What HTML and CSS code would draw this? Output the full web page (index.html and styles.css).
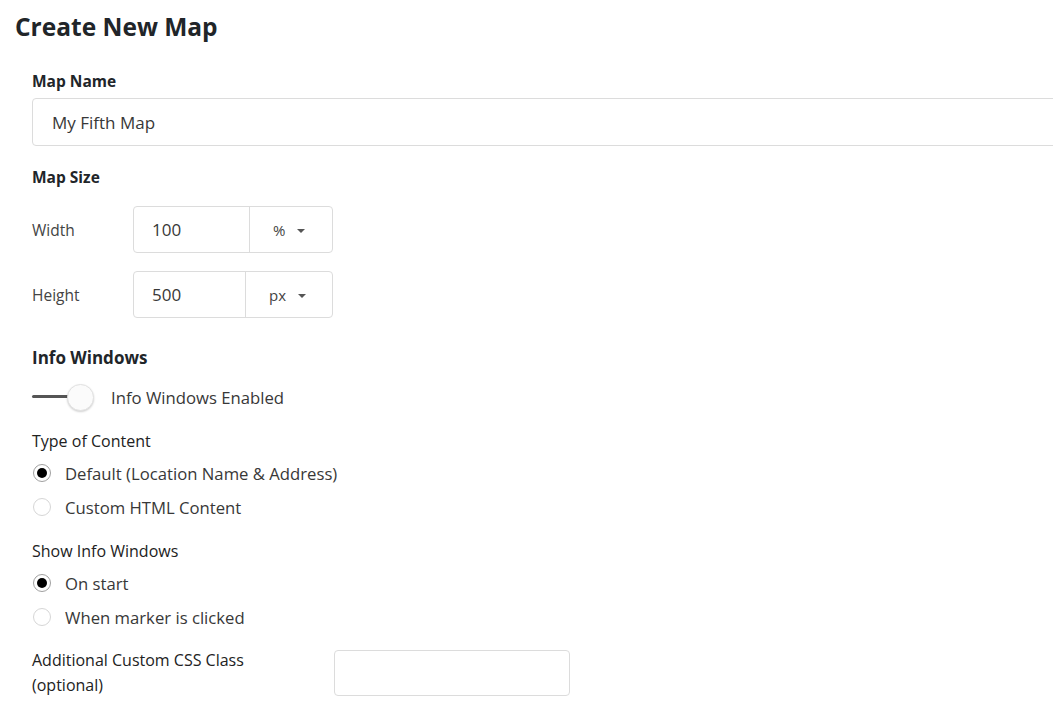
FILE: index.html
```html
<!DOCTYPE html>
<html>
<head>
<meta charset="utf-8">
<link rel="stylesheet" href="styles.css">
</head>
<body>
<div class="page">
  <h1 class="title">Create New Map</h1>
  <div class="form">
    <div class="field">
      <div class="label-bold">Map Name</div>
      <div class="text-input wide"><span class="value">My Fifth Map</span></div>
    </div>

    <div class="label-bold size-head">Map Size</div>
    <div class="size-row">
      <div class="row-label">Width</div>
      <div class="group">
        <div class="group-value w1">100</div>
        <div class="group-select s1"><span>%</span><span class="caret"></span></div>
      </div>
    </div>
    <div class="size-row">
      <div class="row-label">Height</div>
      <div class="group">
        <div class="group-value w2">500</div>
        <div class="group-select s2"><span>px</span><span class="caret"></span></div>
      </div>
    </div>

    <h2 class="section">Info Windows</h2>
    <div class="toggle-row">
      <div class="toggle"><span class="track"></span><span class="knob"></span></div>
      <span class="opt-text">Info Windows Enabled</span>
    </div>

    <div class="group-label">Type of Content</div>
    <div class="radio-row"><span class="radio checked"></span><span class="opt-text">Default (Location Name &amp; Address)</span></div>
    <div class="radio-row"><span class="radio"></span><span class="opt-text">Custom HTML Content</span></div>

    <div class="group-label second">Show Info Windows</div>
    <div class="radio-row"><span class="radio checked"></span><span class="opt-text">On start</span></div>
    <div class="radio-row"><span class="radio"></span><span class="opt-text">When marker is clicked</span></div>

    <div class="css-row">
      <div class="css-label">Additional Custom CSS Class<br>(optional)</div>
      <div class="text-input small"></div>
    </div>
  </div>
</div>
</body>
</html>
```

FILE: styles.css
```css
html, body {
  margin: 0;
  padding: 0;
  background: #ffffff;
  overflow: hidden;
}
body {
  font-family: "Open Sans", "Noto Sans", sans-serif;
  color: #212529;
}
.page {
  padding: 11px 0 0 15px;
  width: 1020px;
}
.title {
  margin: 0;
  font-size: 24.5px;
  font-weight: 700;
  line-height: 32px;
  color: #212529;
}
.form {
  padding-left: 17px;
  margin-top: 28px;
}
.label-bold {
  font-size: 15.5px;
  font-weight: 700;
  line-height: 20px;
}
.field .label-bold {
  margin-bottom: 7px;
}
.text-input {
  box-sizing: border-box;
  border: 1px solid #dcdcdc;
  border-radius: 4px;
  background: #fff;
  display: flex;
  align-items: center;
}
.text-input.wide {
  height: 48px;
  margin-right: -40px;
  padding-left: 19px;
}
.value {
  font-size: 17px;
  color: #383838;
}
.size-head {
  margin-top: 21px;
}
.size-row {
  display: flex;
  align-items: center;
  margin-top: 19px;
}
.size-row + .size-row {
  margin-top: 18px;
}
.row-label {
  width: 101px;
  font-size: 15.5px;
  color: #444;
}
.group {
  display: flex;
  height: 47px;
  box-sizing: border-box;
  border: 1px solid #dcdcdc;
  border-radius: 4px;
}
.group-value {
  display: flex;
  align-items: center;
  padding-left: 18px;
  box-sizing: border-box;
  border-right: 1px solid #dcdcdc;
  font-size: 17px;
  color: #383838;
}
.w1 { width: 116px; }
.w2 { width: 112px; }
.group-select {
  display: flex;
  align-items: center;
  box-sizing: border-box;
  font-size: 15px;
  color: #444;
}
.s1 { width: 82px; padding-left: 23px; }
.s2 { width: 86px; padding-left: 23px; }
.caret {
  width: 0;
  height: 0;
  border-left: 4px solid transparent;
  border-right: 4px solid transparent;
  border-top: 4px solid #555;
  margin-left: 12px;
  margin-top: 2px;
}
.section {
  margin: 29px 0 0 0;
  font-size: 17px;
  font-weight: 700;
  line-height: 22px;
}
.toggle-row {
  display: flex;
  align-items: center;
  margin-top: 14px;
  height: 28px;
}
.toggle {
  position: relative;
  width: 62px;
  height: 28px;
  margin-right: 17px;
}
.track {
  position: absolute;
  left: 0;
  top: 12px;
  width: 46px;
  height: 3px;
  border-radius: 2px;
  background: #555;
}
.knob {
  position: absolute;
  left: 35px;
  top: 1px;
  width: 25px;
  height: 25px;
  border-radius: 50%;
  background: #fbfbfb;
  border: 1px solid #e2e2e2;
  box-shadow: 0 1px 2px rgba(0, 0, 0, 0.18);
}
.opt-text {
  font-size: 16.7px;
  color: #383838;
}
.group-label {
  font-size: 16px;
  color: #222;
  margin-top: 20px;
  line-height: 20px;
}
.group-label.second {
  margin-top: 17px;
}
.radio-row {
  display: flex;
  align-items: center;
  height: 34px;
}
.group-label + .radio-row {
  margin-top: 5px;
}
.radio {
  box-sizing: border-box;
  width: 18px;
  height: 18px;
  border-radius: 50%;
  border: 1px solid #d6d6d6;
  margin-left: 1px;
  margin-right: 14px;
  background: #fff;
  display: flex;
  align-items: center;
  justify-content: center;
}
.radio.checked {
  border-color: #a0a0a0;
}
.radio.checked::after {
  content: "";
  width: 10px;
  height: 10px;
  border-radius: 50%;
  background: #000;
}
.css-row {
  display: flex;
  align-items: center;
  margin-top: 14px;
}
.css-label {
  width: 302px;
  font-size: 16px;
  line-height: 25px;
  color: #222;
}
.text-input.small {
  width: 236px;
  height: 46px;
}
```
